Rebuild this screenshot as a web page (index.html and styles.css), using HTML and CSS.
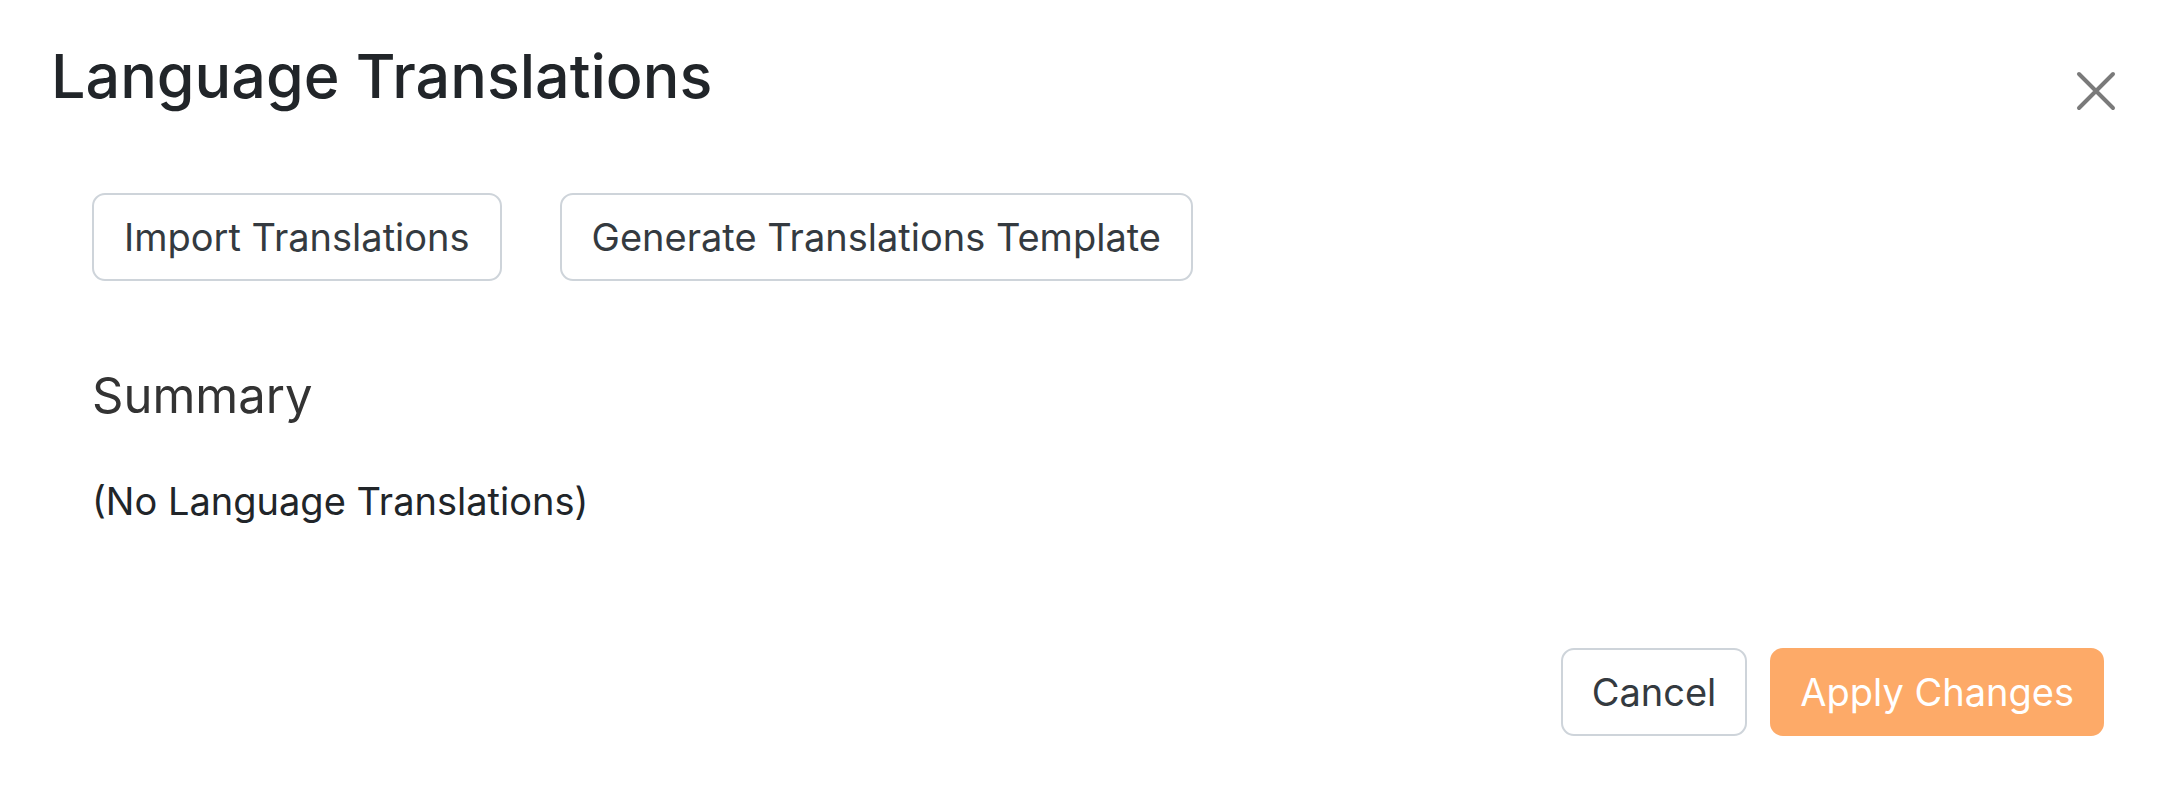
FILE: index.html
```html
<!DOCTYPE html>
<html lang="en">
<head>
<meta charset="utf-8">
<title>Language Translations</title>
<link rel="stylesheet" href="styles.css">
</head>
<body>
<div class="modal">
  <div class="modal-header">
    <h1 class="modal-title">Language Translations</h1>
    <button class="close" aria-label="Close">
      <svg width="40" height="40" viewBox="0 0 40 40"><path d="M3 3 L37 37 M37 3 L3 37" stroke="#7a7a7a" stroke-width="4" stroke-linecap="round" fill="none"/></svg>
    </button>
  </div>
  <div class="modal-body">
    <div class="actions">
      <button class="btn">Import Translations</button>
      <button class="btn">Generate Translations Template</button>
    </div>
    <h2 class="summary-title">Summary</h2>
    <p class="summary-text">(No Language Translations)</p>
  </div>
  <div class="modal-footer">
    <button class="btn btn-cancel">Cancel</button>
    <button class="btn btn-primary">Apply Changes</button>
  </div>
</div>
</body>
</html>
```
FILE: styles.css
```css
html, body {
  margin: 0;
  padding: 0;
  background: #ffffff;
}
body {
  font-family: Inter, "Noto Sans", sans-serif;
  color: #212529;
}
.modal {
  display: flex;
  flex-direction: column;
}
.modal-header {
  display: flex;
  justify-content: space-between;
  align-items: flex-start;
  padding: 40px 50px 0 51px;
}
.modal-title {
  margin: 0;
  font-size: 61px;
  font-weight: 500;
  line-height: 1.2;
  color: #212529;
}
.close {
  margin-top: 31px;
  padding: 0;
  border: none;
  background: transparent;
  width: 40px;
  height: 40px;
  display: flex;
}
.modal-body {
  padding: 80px 0 0 92px;
}
.actions {
  display: flex;
  gap: 58px;
}
.btn {
  font-family: Inter, "Noto Sans", sans-serif;
  font-size: 38px;
  line-height: 1;
  height: 88px;
  padding: 0 30px;
  border: 2px solid #ced4da;
  border-radius: 13px;
  background: #ffffff;
  color: #343a40;
  display: inline-flex;
  align-items: center;
}
.summary-title {
  margin: 86px 0 0 0;
  font-size: 49px;
  font-weight: 400;
  line-height: 1.2;
  color: #333333;
}
.summary-text {
  margin: 47px 0 0 0;
  font-size: 38px;
  line-height: 1.5;
  color: #212529;
}
.modal-footer {
  display: flex;
  justify-content: flex-end;
  gap: 23px;
  padding: 118px 62px 0 0;
}
.btn-cancel {
  padding: 0 29px;
}
.btn-primary {
  padding: 0 28px;
  background: #fdaa68;
  border-color: #fdaa68;
  color: #ffffff;
}
```
